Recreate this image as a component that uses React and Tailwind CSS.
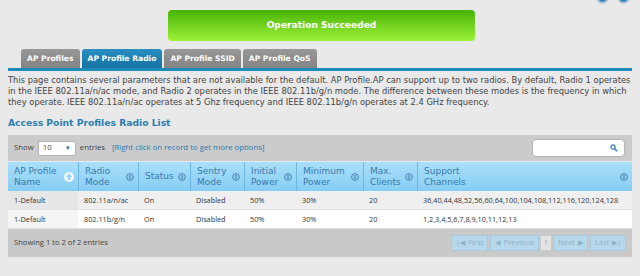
import { useState } from 'react';

const tabs = ['AP Profiles', 'AP Profile Radio', 'AP Profile SSID', 'AP Profile QoS'];

const columns = [
    { label: ['AP Profile', 'Name'], w: 'w-[70px]', sorted: true },
    { label: ['Radio', 'Mode'], w: 'w-[60px]' },
    { label: ['Status'], w: 'w-[52px]' },
    { label: ['Sentry', 'Mode'], w: 'w-[54px]' },
    { label: ['Initial', 'Power'], w: 'w-[52px]' },
    { label: ['Minimum', 'Power'], w: 'w-[67px]' },
    { label: ['Max.', 'Clients'], w: 'w-[54px]' },
    { label: ['Support', 'Channels'], w: 'flex-1' },
];

const rows = [
    ['1-Default', '802.11a/n/ac', 'On', 'Disabled', '50%', '30%', '20', '36,40,44,48,52,56,60,64,100,104,108,112,116,120,124,128'],
    ['1-Default', '802.11b/g/n', 'On', 'Disabled', '50%', '30%', '20', '1,2,3,4,5,6,7,8,9,10,11,12,13'],
];

// little circle with up/down arrows used on the column headers
const SortIcon = ({ active }) => {
    if (active) {
        return (
            <svg width="10" height="10" viewBox="0 0 10 10" className="shrink-0">
                <circle cx="5" cy="5" r="4.8" fill="#ffffff" />
                <path d="M5 1.6 L8.2 5 L6.3 5 L6.3 8.2 L3.7 8.2 L3.7 5 L1.8 5 Z" fill="#8fd0f4" />
            </svg>
        );
    }
    return (
        <svg width="8" height="8" viewBox="0 0 8 8" className="shrink-0">
            <circle cx="4" cy="4" r="3.4" fill="none" stroke="#3f79a8" strokeWidth="0.9" />
            <path d="M4 1.8 L5.6 3.5 L2.4 3.5 Z M4 6.2 L5.6 4.5 L2.4 4.5 Z" fill="#3f79a8" />
        </svg>
    );
};

const PagerButton = ({ children, className = '' }) => (
    <div className={`h-[16px] flex items-center gap-[3px] px-[4px] bg-[#b7d7eb] border border-[#a6c9e0] text-[#8eb1cb] ${className}`}>
        {children}
    </div>
);

const App = () => {
    const [search, setSearch] = useState('');

    return (
        <div className="relative w-[640px] h-[276px] overflow-hidden bg-[#e9e9e9] font-['DejaVu_Sans',sans-serif]">
            {/* top right help icons, mostly cut off */}
            <div className="absolute right-[10px] top-[-9px] flex gap-[8px]">
                <div className="w-[13px] h-[13px] rounded-full border-2 border-[#b9c9d6] bg-[#2f86c4]" />
                <div className="w-[13px] h-[13px] rounded-full border-2 border-[#b9c9d6] bg-[#2f86c4]" />
            </div>

            {/* ===== STATUS BANNER ===== */}
            <div className="pt-[10px] pl-[168px]">
                <div className="w-[307px] h-[31px] rounded-[4px] bg-gradient-to-b from-[#45b400] to-[#9cf236] flex items-center justify-center text-white font-bold text-[9.1px]">
                    Operation Succeeded
                </div>
            </div>

            {/* ===== TABS ===== */}
            <div className="mt-[8px] pl-[21px] flex gap-[2px] items-end">
                {tabs.map((tab, i) => (
                    <div
                        key={tab}
                        className={`h-[19px] px-[6px] flex items-center rounded-t-[3px] text-white font-bold text-[7.6px] ${
                            i === 1 ? 'bg-gradient-to-b from-[#2a8fc2] to-[#1672a3]' : 'bg-gradient-to-b from-[#989898] to-[#838383]'
                        }`}
                    >
                        {tab}
                    </div>
                ))}
            </div>
            <div className="mx-[8px] h-[3px] bg-[#1d8cba]" />

            {/* ===== DESCRIPTION ===== */}
            <p className="px-[8px] mt-[4px] text-[8.35px] leading-[11px] text-[#444444] whitespace-nowrap">
                This page contains several parameters that are not available for the default. AP Profile.AP can support up to two radios. By default, Radio 1 operates
                <br />
                in the IEEE 802.11a/n/ac mode, and Radio 2 operates in the IEEE 802.11b/g/n mode. The difference between these modes is the frequency in which
                <br />
                they operate. IEEE 802.11a/n/ac operates at 5 Ghz frequency and IEEE 802.11b/g/n operates at 2.4 GHz frequency.
            </p>

            <h2 className="px-[8px] mt-[9px] text-[9.2px] font-bold text-[#2c7fae] leading-[12px]">Access Point Profiles Radio List</h2>

            {/* ===== TABLE ===== */}
            <div className="mx-[8px] mt-[6px] font-['Open_Sans',sans-serif]">
                <div className="h-[26px] bg-[#cbcbcb] flex items-center pl-[6px] pr-[7px] text-[7.8px] text-[#444444]">
                    <span>Show</span>
                    <div className="ml-[4px] w-[38px] h-[15px] bg-white rounded-[2px] border border-[#b5b5b5] flex items-center justify-between px-[4px]">
                        <span>10</span>
                        <span className="text-[6px] text-[#2d6da0]">▼</span>
                    </div>
                    <span className="ml-[4px]">entries</span>
                    <span className="ml-[7px] text-[#2d79ad]">[Right click on record to get more options]</span>
                    <div className="ml-auto w-[93px] h-[18px] bg-white rounded-[4px] border border-[#b5b5b5] flex items-center pr-[6px]">
                        <input
                            value={search}
                            onChange={(e) => setSearch(e.target.value)}
                            className="w-full outline-none px-[4px] text-[7px] bg-transparent"
                        />
                        <svg width="8" height="8" viewBox="0 0 8 8" className="shrink-0">
                            <circle cx="3" cy="3" r="2.1" fill="none" stroke="#3b82c0" strokeWidth="1.2" />
                            <path d="M4.6 4.6 L7.2 7.2" stroke="#3b82c0" strokeWidth="1.6" />
                        </svg>
                    </div>
                </div>

                {/* header */}
                <div className="flex h-[29px] mt-[1px] bg-gradient-to-b from-[#a9e0fb] to-[#86cdf3] font-['DejaVu_Sans',sans-serif] text-[9px] leading-[11px] text-[#3d78a8]">
                    {columns.map((col, i) => (
                        <div
                            key={i}
                            className={`${col.w} h-full flex items-center justify-between pl-[6px] pr-[4px] ${i > 0 ? 'border-l border-[#6fb6de]' : ''}`}
                        >
                            <div className="whitespace-nowrap">
                                {col.label.map((l) => (
                                    <div key={l}>{l}</div>
                                ))}
                            </div>
                            <SortIcon active={col.sorted} />
                        </div>
                    ))}
                </div>

                {/* body */}
                {rows.map((row, r) => (
                    <div key={r} className={`flex h-[19px] text-[7.3px] text-[#333333] border-b border-[#e2e2e2] ${r === 0 ? 'bg-[#efefef]' : 'bg-white'}`}>
                        {row.map((cell, c) => (
                            <div
                                key={c}
                                className={`${columns[c].w} flex items-center pl-[6px] ${c === 0 ? (r === 0 ? 'bg-[#e7e7e7]' : 'bg-[#f4f4f4]') : ''}`}
                            >
                                {cell}
                            </div>
                        ))}
                    </div>
                ))}

                {/* footer */}
                <div className="h-[28px] bg-[#c9c9c9] flex items-center pl-[6px] pr-[6px] text-[7.6px] text-[#444444]">
                    <span>Showing 1 to 2 of 2 entries</span>
                    <div className="ml-auto flex items-center gap-[2px] text-[7.6px]">
                        <PagerButton>
                            <span className="text-[7px]">|◀</span>
                            <span>First</span>
                        </PagerButton>
                        <PagerButton>
                            <span className="text-[7px]">◀</span>
                            <span>Previous</span>
                        </PagerButton>
                        <div className="h-[14px] w-[10px] flex items-center justify-center bg-[#e3e3e3] text-[#a9a9a9]">1</div>
                        <PagerButton>
                            <span>Next</span>
                            <span className="text-[7px]">▶</span>
                        </PagerButton>
                        <PagerButton>
                            <span>Last</span>
                            <span className="text-[7px]">▶|</span>
                        </PagerButton>
                    </div>
                </div>
            </div>
        </div>
    );
};

export default App;
